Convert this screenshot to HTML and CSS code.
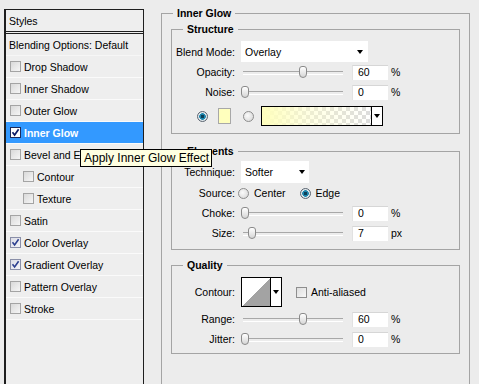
FILE: index.html
```html
<!DOCTYPE html>
<html>
<head>
<meta charset="utf-8">
<link rel="stylesheet" href="styles.css">
</head>
<body>
<div class="app">
  <aside class="styles-panel">
    <div class="panel-title">Styles</div>
    <div class="panel-row head">Blending Options: Default</div>
    <div class="panel-row"><span class="cb"></span>Drop Shadow</div>
    <div class="panel-row"><span class="cb"></span>Inner Shadow</div>
    <div class="panel-row"><span class="cb"></span>Outer Glow</div>
    <div class="panel-row active"><span class="cb on white"><svg viewBox="0 0 9 9"><path d="M1.5 4.3 L3.6 7 L7.6 1.3" stroke="#0a1a66" stroke-width="1.7" fill="none"/></svg></span>Inner Glow</div>
    <div class="panel-row"><span class="cb"></span>Bevel and Emboss</div>
    <div class="panel-row sub"><span class="cb"></span>Contour</div>
    <div class="panel-row sub"><span class="cb"></span>Texture</div>
    <div class="panel-row"><span class="cb"></span>Satin</div>
    <div class="panel-row"><span class="cb on"><svg viewBox="0 0 9 9"><path d="M1.5 4.3 L3.6 7 L7.6 1.3" stroke="#2c3f8f" stroke-width="1.6" fill="none"/></svg></span>Color Overlay</div>
    <div class="panel-row"><span class="cb on"><svg viewBox="0 0 9 9"><path d="M1.5 4.3 L3.6 7 L7.6 1.3" stroke="#2c3f8f" stroke-width="1.6" fill="none"/></svg></span>Gradient Overlay</div>
    <div class="panel-row"><span class="cb"></span>Pattern Overlay</div>
    <div class="panel-row"><span class="cb"></span>Stroke</div>
  </aside>

  <main class="settings">
    <fieldset class="group outer">
      <legend>Inner Glow</legend>

      <fieldset class="group structure">
        <legend>Structure</legend>
        <div class="form-row blend-row">
          <label>Blend Mode:</label>
          <div class="select wide"><span>Overlay</span><i class="arrow"></i></div>
        </div>
        <div class="form-row">
          <label>Opacity:</label>
          <div class="slider-field">
            <div class="slider"><span class="thumb" style="--v:60"></span></div>
            <div class="num">60</div><span class="unit">%</span>
          </div>
        </div>
        <div class="form-row">
          <label>Noise:</label>
          <div class="slider-field">
            <div class="slider"><span class="thumb" style="--v:0"></span></div>
            <div class="num">0</div><span class="unit">%</span>
          </div>
        </div>
        <div class="color-row">
          <span class="radio checked"></span>
          <span class="swatch"></span>
          <span class="radio gap-radio"></span>
          <div class="gradient-pick"><span class="grad"></span><span class="pick-arrow"><i class="arrow"></i></span></div>
        </div>
      </fieldset>

      <fieldset class="group elements">
        <legend>Elements</legend>
        <div class="form-row tech-row">
          <label>Technique:</label>
          <div class="select narrow"><span>Softer</span><i class="arrow"></i></div>
        </div>
        <div class="form-row source-row">
          <label>Source:</label>
          <div class="radio-group">
            <span class="radio first"></span><span class="opt">Center</span>
            <span class="radio checked second"></span><span class="opt">Edge</span>
          </div>
        </div>
        <div class="form-row">
          <label>Choke:</label>
          <div class="slider-field">
            <div class="slider"><span class="thumb" style="--v:0"></span></div>
            <div class="num">0</div><span class="unit">%</span>
          </div>
        </div>
        <div class="form-row">
          <label>Size:</label>
          <div class="slider-field">
            <div class="slider"><span class="thumb" style="--v:7"></span></div>
            <div class="num">7</div><span class="unit">px</span>
          </div>
        </div>
      </fieldset>

      <fieldset class="group quality">
        <legend>Quality</legend>
        <div class="form-row contour-row">
          <label>Contour:</label>
          <div class="contour-field">
            <div class="contour-pick"><span class="curve"></span><span class="pick-arrow"><i class="arrow"></i></span></div>
            <span class="cb plain"></span><span class="opt">Anti-aliased</span>
          </div>
        </div>
        <div class="form-row range-row">
          <label>Range:</label>
          <div class="slider-field">
            <div class="slider"><span class="thumb" style="--v:60"></span></div>
            <div class="num">60</div><span class="unit">%</span>
          </div>
        </div>
        <div class="form-row">
          <label>Jitter:</label>
          <div class="slider-field">
            <div class="slider"><span class="thumb" style="--v:0"></span></div>
            <div class="num">0</div><span class="unit">%</span>
          </div>
        </div>
      </fieldset>
    </fieldset>
  </main>
</div>
<div class="tooltip">Apply Inner Glow Effect</div>
</body>
</html>
```
FILE: styles.css
```css
* { box-sizing: border-box; }
html, body { margin: 0; height: 100%; }
body {
  background: #ececec;
  font-family: "Liberation Sans", Arial, sans-serif;
  font-size: 10.5px;
  color: #000;
  overflow: hidden;
  position: relative;
}
.app { display: flex; align-items: flex-start; height: 384px; overflow: hidden; }

/* left styles list */
.styles-panel {
  margin: 9px 0 0 4px;
  width: 140px;
  height: 375px;
  border: 1px solid #1e1e1e;
  border-left-width: 2px;
  border-bottom: none;
  background: #eeeeee;
}
.panel-title {
  height: 24px;
  padding-left: 3px;
  display: flex;
  align-items: center;
  border-bottom: 3px double #1e1e1e;
}
.panel-row {
  height: 22px;
  display: flex;
  align-items: center;
  gap: 3px;
  padding-left: 4px;
  border-bottom: 1px solid #fafafa;
  white-space: nowrap;
  overflow: hidden;
}
.panel-row.head { padding-left: 3px; border-bottom-color: #f6f6f6; }
.panel-row.sub { padding-left: 17px; }
.panel-row.active { background: #3399ff; color: #fff; font-weight: bold; }

.cb {
  width: 11px; height: 11px; flex: none;
  border: 1px solid #a4a4a4;
  background: linear-gradient(135deg, #d9d9d9, #f6f6f6);
  display: inline-flex; align-items: center; justify-content: center;
}
.cb svg { width: 9px; height: 9px; }
.cb.on { border-color: #8a8fa8; background: linear-gradient(135deg, #dcdde6, #f4f4f8); }
.cb.white { background: #fff; border-color: #1c2a5a; }
.cb.plain { border-color: #8e8e8e; background: linear-gradient(135deg, #dedede, #f8f8f8); }

/* right settings */
.settings { margin: 6px 0 0 17px; }
.group {
  margin: 0;
  padding: 0;
  min-width: 0;
  border: 1px solid #a4a4a4;
}
.group > legend {
  padding: 0 4px;
  margin-left: 11px;
  font-weight: bold;
  line-height: 14px;
}
.outer { width: 309px; height: 378px; padding: 0 9px; border-bottom: none; }
.outer > legend { margin-left: 2px; }
.structure { margin-top: 2px; padding-bottom: 7px; }
.elements { margin-top: 10px; padding-bottom: 6px; }
.quality { margin-top: 8px; padding-bottom: 4px; }

.form-row {
  display: grid;
  grid-template-columns: 63px 1fr;
  column-gap: 6px;
  align-items: center;
  height: 20px;
}
.form-row label { text-align: right; white-space: nowrap; }
.blend-row { margin-top: 5px; height: 21px; }
.tech-row { margin-top: 3px; height: 22px; }
.contour-row { margin-top: 5px; height: 30px; }
.range-row { margin-top: 2px; }

.select {
  background: #fff;
  height: 100%;
  display: flex;
  align-items: center;
  padding: 0 5px 0 4px;
}
.select.wide { width: 127px; }
.select.narrow { width: 68px; padding-right: 4px; }
.arrow {
  margin-left: auto;
  width: 0; height: 0;
  border-left: 3.5px solid transparent;
  border-right: 3.5px solid transparent;
  border-top: 4px solid #000;
}

.slider-field { display: flex; align-items: center; }
.slider { width: 104px; height: 14px; position: relative; }
.slider::before {
  content: "";
  position: absolute;
  left: 2px; right: 2px; top: 6px;
  height: 2px;
  border-top: 1px solid #a8a8a8;
  border-bottom: 1px solid #fff;
}
.thumb {
  position: absolute;
  top: 1px;
  left: calc(var(--v) * 0.96px);
  width: 8px; height: 12px;
  border: 1px solid #8a8a8a;
  border-radius: 3px 3px 4px 4px;
  background: linear-gradient(#ffffff, #d6d6d6);
}
.num {
  margin-left: 7px;
  width: 36px; height: 15px;
  background: #fff;
  border-top: 1px solid #d6d6d6;
  border-left: 1px solid #e2e2e2;
  padding-left: 5px;
  line-height: 13px;
}
.unit { margin-left: 3px; }

.radio {
  width: 11px; height: 11px; flex: none;
  border-radius: 50%;
  border: 1px solid #8c8c8c;
  background: radial-gradient(circle at 40% 40%, #fafafa, #d4d4d4);
  display: inline-block;
}
.radio.checked {
  border-color: #5a6470;
  background: radial-gradient(circle, #0b3f57 0 1.5px, #1f86ad 2px 3px, #e6eef2 3.6px, #c8cfd4 100%);
}

.color-row {
  display: flex;
  align-items: center;
  height: 20px;
  margin-top: 4px;
  padding-left: 25px;
}
.swatch {
  margin-left: 10px;
  width: 13px; height: 16px;
  background: #ffffbd;
  border: 1px solid #a8a8a8;
}
.gap-radio { margin-left: 12px; }
.gradient-pick {
  margin-left: 7px;
  width: 122px; height: 20px;
  border: 1px solid #000;
  display: flex;
  background: #fff;
}
.grad {
  flex: 1;
  background:
    linear-gradient(90deg, #ffffbd 0%, rgba(255,255,200,0.55) 40%, rgba(255,255,255,0) 100%),
    repeating-conic-gradient(#dcdcdc 0 25%, #ffffff 0 50%) 0 0 / 8px 8px;
}
.pick-arrow {
  width: 11px;
  border-left: 1px solid #000;
  background: #fff;
  display: flex;
  align-items: center;
  justify-content: center;
}
.pick-arrow .arrow { margin: 0; }

.radio-group { display: flex; align-items: center; margin-left: -3px; }
.opt { margin-left: 5px; }
.radio.second { margin-left: 14px; }
.source-row { height: 20px; }

.contour-field { display: flex; align-items: center; }
.contour-pick {
  width: 41px; height: 30px;
  border: 1px solid #000;
  display: flex;
}
.curve {
  flex: 1;
  background: linear-gradient(to top left, #a3a3a3 50%, #ffffff 50%);
}
.contour-field .cb { margin-left: 14px; }
.contour-field .opt { margin-left: 4px; }

.tooltip {
  position: absolute;
  left: 80px; top: 149px;
  width: 132px; height: 18px;
  background: #ffffe1;
  border: 1px solid #000;
  font-size: 12px;
  line-height: 16px;
  padding-left: 3px;
  white-space: nowrap;
}
```
